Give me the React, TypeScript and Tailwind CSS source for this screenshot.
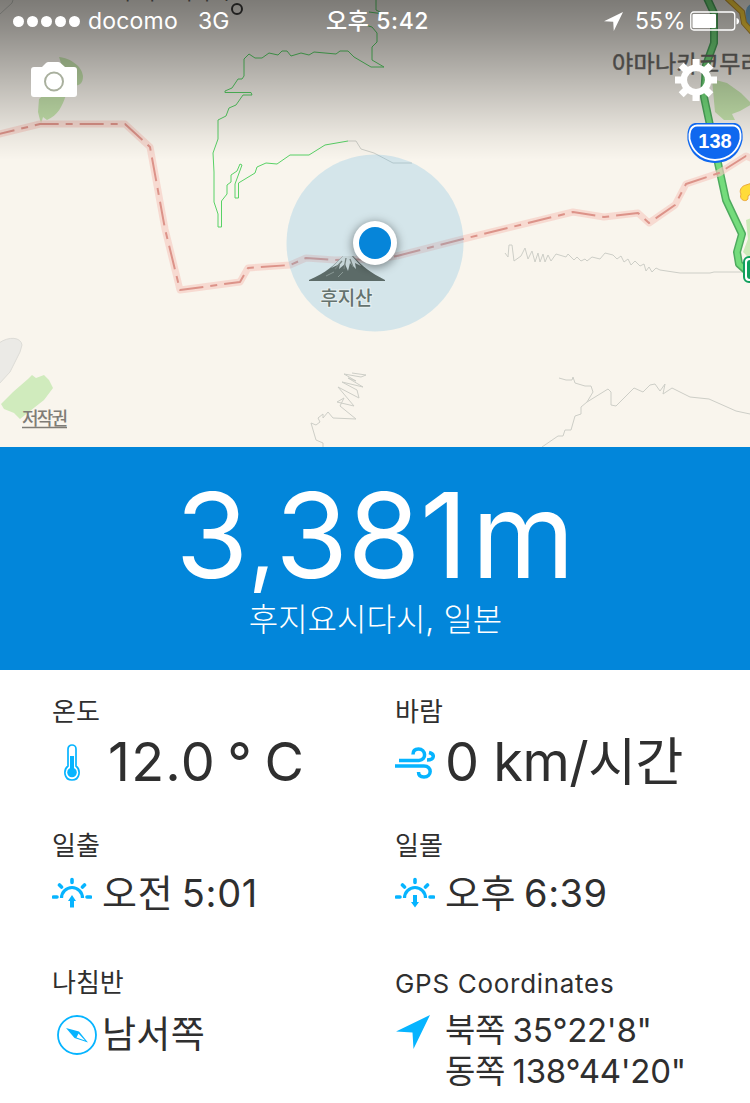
import React from 'react';

interface Stat {
  label: string;
  labelClass: string;
  icon: React.ReactNode;
  iconClass: string;
  value: React.ReactNode;
  valueClass: string;
}

// Country border, drawn twice: wide halo and dashed core
const BORDER_WEST = 'M-5 135 L40 124 H125 L150 147 L165 229 L180 290 L240 282 L248 268 L290 265 L306 258 L335 260 L375 259 L397 256';
const BORDER_EAST = 'M397 256 L463 239 L573 212 L604 217 L638 213 L649 223 L675 205 L686 184 L719 173 L746 156 L755 160';

const MapView = () => (
  <svg className="absolute inset-0 h-full w-full" viewBox="0 0 750 447" fill="none">
    <defs>
      <filter id="soft" x="-50%" y="-50%" width="200%" height="200%">
        <feGaussianBlur stdDeviation="5" />
      </filter>
      <linearGradient id="shade" x1="0" y1="0" x2="0" y2="1">
        <stop offset="0" stopColor="#000" stopOpacity="0.5" />
        <stop offset="0.18" stopColor="#000" stopOpacity="0.42" />
        <stop offset="0.85" stopColor="#000" stopOpacity="0.06" />
        <stop offset="1" stopColor="#000" stopOpacity="0" />
      </linearGradient>
    </defs>
    <rect width="750" height="447" fill="#f9f5ed" />

    {/* parks */}
    <path d="M59 57 C70 58 82 66 83 76 C83 85 78 87 70 84 L66 95 C62 107 58 115 47 120 L43 117 L41 124 L38 112 L39 99 L50 90 L62 66Z" fill="#c7e5ae" />
    <path d="M1 404 L13 392 L28 379 L32 375 L36 378 L44 375 L49 380 L53 388 L44 400 L30 411 L20 419 L14 413 L4 409Z" fill="#d0ebbd" />
    <path d="M-1 343 C9 336 21 337 22 345 L20 352 L10 372 L-1 384Z" fill="#ebeae6" stroke="#dddcd7" />
    <path d="M712 79 L727 83 L741 93 L752 104 L740 111 L732 114 L735 120 L724 120 L715 112Z" fill="#c7e5ae" />
    <path d="M751 218 L746 220 L748 239 L743 252 L751 260Z" fill="#cdeab9" />
    <path d="M751 4 C744 6 743 22 751 29Z" fill="#81bce0" />

    {/* mountain trails */}
    <g stroke="#59d266" strokeWidth="1">
      <path d="M376 0 V10 L384 14 L369 12 M362 24 L372 27 L377 33 V42 L372 47 V60 L384 67 L371 67 L354 57 L348 51 H340 L336 54 L314 52 L309 55 L301 53 L291 56 L287 51 L282 51 L278 55 L269 53 L262 58 H255 L249 54 L244 59 V76 L242 79 H238 L232 88 L225 91 V92.500 H251 L252 95 H243 L236 105 L229 108 L226 116 L218 120 V139 L213 153 L214 172 V202 L218 214 V227 H221.500 V201 L227 194 V185 L231 182 V175 L237 171 L240 164 L242 165 L235 184 V198 H238.500 V183 L255 173 L257 167 L266 163 L277 164 L290 155 H309 L325 145 L348 141" />
    </g>
    <g stroke="#cdcec7" strokeWidth="1">
      <path d="M348 141 H356 L361 149 L374 153 L393 163 H412 M13 0 L12 3 L0 14" />
      <path d="M505 253 L508 257 L509 245 H512 L514 261 L521 256 L525 248 L528 259 L532 251 L535 262 L538 253 L540 262 L543 254 L545 262 L548 255 L551 261 L556 254 L566 257 L568 254 L572 258 L574 260 L577 257 L581 261 L585 259 L587 261 L592 257 L600 259 L605 253 L613 255 L617 259 L621 256 L624 262 L628 259 L631 265 L635 261 L640 266 L644 264 L646 271 L649 267 L652 272 L656 268 L660 270 L680 273 H710 L714 272 H748" />
      <path d="M559 378 L566 380 H572 L573 377 L575 383 L585 386 H591 L593 392 L587 402 L608 389 L611 392 V405 L616 406 L634 388 L643 392 L650 385 L655 384 L660 391 L665 384 L663 394 L672 388 L690 397 L709 399 L736 411 L750 414 M587 402 L581 407 V414 L575 416 L571 430 H565 L563 436 H558 L542 447" />
      <path d="M352 373 L366 375 L361 377 L344 374 L356 381 L348 378 L363 387 L342 382 L357 390 L359 398 L338 387 L354 406 L337 402 L344 398 L340 406 L356 419 L333 418 L328 412 L323 418 V414 L318 418 L320 422 L316 425 L311 423 L316 440 L323 443 V447" />
    </g>

    {/* roads */}
    <path d="M727 -2 L742 12 L744 23 L753 33" stroke="#c99a36" strokeWidth="6" />
    <path d="M727 -2 L742 12 L744 23 L753 33" stroke="#ffd63c" strokeWidth="4" />
    <path d="M707 -2 L714 13 V43 L706 65 L704 97 L718 163 L726 200 L742 234 L737 252 L739 264 L748 272" stroke="#4eaa5e" strokeWidth="8" strokeLinejoin="round" />
    <path d="M707 -2 L714 13 V43 L706 65 L704 97 L718 163 L726 200 L742 234 L737 252 L739 264 L748 272" stroke="#74dc7c" strokeWidth="5" strokeLinejoin="round" />
    <path d="M752 183 L746 185 C741 186 739 191 741 194 C739 199 744 202 747 200 C749 199 747 196 749 195 L752 194Z" fill="#ffdc3a" stroke="#eba93e" />

    <g strokeLinejoin="round">
      <path d={BORDER_WEST} stroke="#f6cbc1" strokeOpacity="0.65" strokeWidth="7" />
      <path d={BORDER_EAST} stroke="#f6cbc1" strokeOpacity="0.65" strokeWidth="7" />
      <path d={BORDER_WEST} stroke="#dc9389" strokeWidth="2" strokeDasharray="24 7 7 7" strokeDashoffset="4" />
      <path d={BORDER_EAST} stroke="#dc9389" strokeWidth="2" strokeDasharray="24 7 7 7" />
    </g>

    {/* expressway badge cut by the screen edge */}
    <rect x="744" y="257" width="20" height="25" rx="5" fill="#fff" stroke="#11a05d" strokeWidth="2" />
    <rect x="747" y="260" width="20" height="19" rx="3" fill="#11a05d" />

    <g fontFamily="'Noto Sans CJK KR', sans-serif" fill="#6a6864" fontSize="23" fontWeight="400">
      <text x="612" y="72" textLength="150" stroke="#6a6864" strokeWidth="0.500">야마나카코무라</text>
      <text x="118" y="-1" fontSize="21" textLength="112">후지노미야시</text>
    </g>
    <circle cx="237" cy="9" r="5" stroke="#3c3b39" strokeWidth="2" />

    <rect width="750" height="160" fill="url(#shade)" />

    <path d="M695 123 H735 C742 124 743 132 742.500 140 C740 152 732 162.500 715 163 C698 162.500 690 152 687.500 140 C687 132 688 124 695 123Z" fill="#0f68ef" />
    <path d="M697 125.500 H733 C740 126 741 133 740.500 139 C738 150 730 159.500 715 160 C700 159.500 692 150 689.500 139 C689 133 690 126 697 125.500Z" stroke="#fff" strokeWidth="1.800" />
    <text x="715" y="148" textAnchor="middle" fontFamily="'Liberation Sans', sans-serif" fontSize="20" fontWeight="700" fill="#fff">138</text>

    {/* accuracy circle */}
    <circle cx="375" cy="243" r="88.500" fill="#5bb1e0" fillOpacity="0.23" />

    {/* Mt. Fuji */}
    <path d="M309 280 C326 273 334 265 343 256 H353 C362 266 371 273 385 280 V281 H309Z" fill="#5c6b68" />
    <path d="M343 256 H352 L361 266 L355 263 L356 269 L350 263 L348 271 L345 264 L339 269 L340 264 L331 268Z" fill="#c7d6d9" />
    <path d="M346 258 L344 269 M350 259 L353 267 M342 261 L335 269" stroke="#75827f" strokeWidth="1.300" />
    <path d="M334 272 L326 276 M343 272 L338 277" stroke="#8a9996" />
    <text x="320.500" y="305" textLength="52" fontFamily="'Noto Sans CJK KR', sans-serif" fontSize="19" fontWeight="500" fill="#64736f" stroke="#e7f0f1" strokeWidth="2" paintOrder="stroke">후지산</text>

    {/* current position */}
    <circle cx="375" cy="245" r="23" fill="#000" fillOpacity="0.4" filter="url(#soft)" />
    <circle cx="375" cy="243" r="22" fill="#fff" />
    <circle cx="375" cy="243" r="16" fill="#0685d9" />

    <text x="22" y="425" textLength="46" fontFamily="'Noto Sans CJK KR', sans-serif" fontSize="18" fontWeight="500" fill="#7f7c76">저작권</text>
    <path d="M22 427.500 H67" stroke="#7f7c76" strokeWidth="1.500" />
  </svg>
);

const LocationArrow = ({ className }: { className: string }) => (
  <svg className={className} viewBox="0 0 34 34" fill="currentColor">
    <path d="M34 0 L17.500 34 L16.500 17.500 L0 16.500Z" />
  </svg>
);

const StatusBar = () => (
  <div className="relative flex h-[42px] items-center font-['Inter','Noto_Sans_CJK_KR',sans-serif] text-[23px] leading-none text-white">
    <div className="flex w-[326px] items-center pl-[13px]">
      <div className="flex gap-[3px]">
        {[0, 1, 2, 3, 4].map((dot) => (
          <span key={dot} className="h-[11px] w-[11px] rounded-full bg-white" />
        ))}
      </div>
      <span className="ml-[8px] w-[110px] tracking-[0.2px]">docomo</span>
      <span>3G</span>
    </div>
    <span className="w-[278px] font-medium tracking-[0.6px]">오후 5:42</span>
    <LocationArrow className="h-[19px] w-[19px]" />
    <span className="ml-[12px] w-[55px] whitespace-nowrap">55%</span>
    <svg className="h-5 w-[50px]" viewBox="0 0 50 20" fill="none">
      <rect x="0.750" y="1" width="44" height="18" rx="3" stroke="#fff" strokeWidth="1.300" />
      <rect x="2.500" y="3" width="23.500" height="14" rx="1" fill="#fff" />
      <path d="M46.500 7 C50 7.500 50 13 46.500 13.500Z" fill="#fff" />
    </svg>
  </div>
);

const CameraIcon = () => (
  <svg className="h-[35px] w-[46px]" viewBox="0 0 46 35" fill="none">
    <path
      d="M3 5 H11 L15 1 Q16 0 17.500 0 H27 Q28.500 0 29.500 1 L34 5 H43 Q46 5 46 8 V32 Q46 35 43 35 H3 Q0 35 0 32 V8 Q0 5 3 5Z"
      fill="#fff"
    />
    <circle cx="23" cy="19.500" r="9" stroke="#a9b09e" strokeWidth="2" />
  </svg>
);

const GearIcon = () => (
  <svg className="h-[42px] w-[42px]" viewBox="-21 -21 42 42" fill="none">
    <circle r="12.200" stroke="#fff" strokeWidth="6.500" />
    {[0, 45, 90, 135, 180, 225, 270, 315].map((angle) => (
      <rect key={angle} x="-3.500" y="-21" width="7" height="8" fill="#fff" transform={`rotate(${angle})`} />
    ))}
  </svg>
);

const ThermometerIcon = () => (
  <svg className="h-[37px] w-[16px]" viewBox="0 0 16 37" fill="none">
    <path d="M4 22 V5 A4 4 0 0 1 12 5 V22 C17 26 16 36 8 36 C0 36 -1 26 4 22Z" stroke="#06b4ff" strokeWidth="1.700" />
    <path d="M8 12 V26" stroke="#06b4ff" strokeWidth="4" />
    <circle cx="8" cy="28.500" r="4.800" fill="#06b4ff" />
  </svg>
);

const WindIcon = () => (
  <svg className="h-[32px] w-[40px]" viewBox="0 0 40 32" fill="none" stroke="#06b4ff" strokeWidth="3.500">
    <path d="M4 13.500 H24 C32 13 31 2 23.500 2 C20 2 18 4 18 7.500" />
    <path d="M0 19 H29 C37.500 19 37 30 29 30 C25.500 30 23.500 28 23.500 25" />
    <path d="M34 5.500 C40 7 40 13 32 13" />
  </svg>
);

const SunIcon = ({ down }: { down?: boolean }) => (
  <svg className="h-[32px] w-[40px]" viewBox="0 0 40 32" fill="none" stroke="#06b4ff" strokeWidth="3.200">
    <path d="M9.500 21 A10.500 10.500 0 0 1 30.500 21" />
    <path d="M20 2.500 V5.500 M7.500 8 L9.500 10 M32.500 8 L30.500 10 M1.500 20 H5 M35 20 H38.500" strokeLinecap="round" strokeWidth="3.600" />
    {down ? (
      <path d="M18 18 H22 V25 H24 L20 30.500 L16 25 H18Z" fill="#06b4ff" stroke="none" />
    ) : (
      <path d="M20 18 L24 24 H22 V30.500 H18 V24 H16Z" fill="#06b4ff" stroke="none" />
    )}
  </svg>
);

const CompassIcon = () => (
  <svg className="h-10 w-10" viewBox="0 0 40 40" fill="none">
    <circle cx="20" cy="20" r="19" stroke="#06b4ff" strokeWidth="1.800" />
    <path d="M9 13 L22 16.500 L31 27.500 L17.500 23Z" fill="#06b4ff" />
    <path d="M21.500 18.500 L28 25.500 L19.500 22.500Z" fill="#fff" />
  </svg>
);

const StatCard: React.FC<Stat> = ({ label, labelClass, icon, iconClass, value, valueClass }) => (
  <div>
    <div className={`text-[26px] leading-[30px] ${labelClass}`}>{label}</div>
    <div className="flex">
      <div className={`w-[50px] shrink-0 ${iconClass}`}>{icon}</div>
      <div className={`whitespace-nowrap ${valueClass}`}>{value}</div>
    </div>
  </div>
);

const stats: Stat[] = [
  {
    label: '온도',
    labelClass: '',
    icon: <ThermometerIcon />,
    iconClass: 'pt-[17px] pl-[12px]',
    value: '12.0 ° C',
    valueClass: 'pl-[6px] pt-[3px] text-[54px] leading-[64px] tracking-[1.2px] [word-spacing:-5px]',
  },
  {
    label: '바람',
    labelClass: '',
    icon: <WindIcon />,
    iconClass: 'pt-[20px]',
    value: (
      <>
        0 km/<span className="text-[52px]">시간</span>
      </>
    ),
    valueClass: 'pt-[3px] text-[54px] leading-[64px] tracking-[-0.5px]',
  },
  {
    label: '일출',
    labelClass: '',
    icon: <SunIcon />,
    iconClass: 'pt-[16px]',
    value: '오전 5:01',
    valueClass: 'pt-[8px] text-[38px] leading-[48px] tracking-[0.7px] [word-spacing:-3px]',
  },
  {
    label: '일몰',
    labelClass: '',
    icon: <SunIcon down />,
    iconClass: 'pt-[16px]',
    value: '오후 6:39',
    valueClass: 'pt-[8px] text-[38px] leading-[48px] tracking-[0.5px] [word-spacing:-3px]',
  },
  {
    label: '나침반',
    labelClass: '',
    icon: <CompassIcon />,
    iconClass: 'pt-[17px] pl-[5px]',
    value: '남서쪽',
    valueClass: 'pt-[13px] text-[37px] leading-[48px] tracking-[0.3px]',
  },
  {
    label: 'GPS Coordinates',
    labelClass: 'pt-px tracking-[0.7px]',
    icon: <LocationArrow className="h-[34px] w-[34px] text-[#06b4ff]" />,
    iconClass: 'pt-[16px] pl-px',
    value: (
      <>
        <div>북쪽 35°22'8"</div>
        <div>동쪽 138°44'20"</div>
      </>
    ),
    valueClass: 'pt-[11px] text-[33px] leading-[41px] tracking-[-0.3px] [word-spacing:-1.5px]',
  },
];

export default function App() {
  return (
    <div className="h-[1103px] w-[750px] overflow-hidden bg-white">
      <div className="relative h-[447px] overflow-hidden">
        <MapView />
        <StatusBar />
        <div className="relative flex items-start justify-between pr-[33px] pl-[31px] pt-[17px]">
          <div className="pt-[3px]">
            <CameraIcon />
          </div>
          <GearIcon />
        </div>
      </div>

      <div className="flex h-[223px] flex-col items-center bg-[#0286da] pt-[24px] text-white">
        <div className="h-[128px] font-['Inter',sans-serif] text-[118px] leading-[128px] tracking-[-0.5px]">
          3<span className="align-[2px] text-[96px] leading-none">,</span>381<span className="pl-[4px]">m</span>
        </div>
        <div className="pt-px pl-px font-['Inter','Noto_Sans_CJK_KR',sans-serif] text-[32px] leading-[40px] font-light">후지요시다시, 일본</div>
      </div>

      <div className="grid grid-cols-[343px_1fr] grid-rows-[134px_137px_140px] pt-[27px] pl-[52px] font-['Inter','Noto_Sans_CJK_KR',sans-serif] font-normal text-[#2f2f2f]">
        {stats.map((stat) => (
          <StatCard key={stat.label} {...stat} />
        ))}
      </div>
    </div>
  );
}
